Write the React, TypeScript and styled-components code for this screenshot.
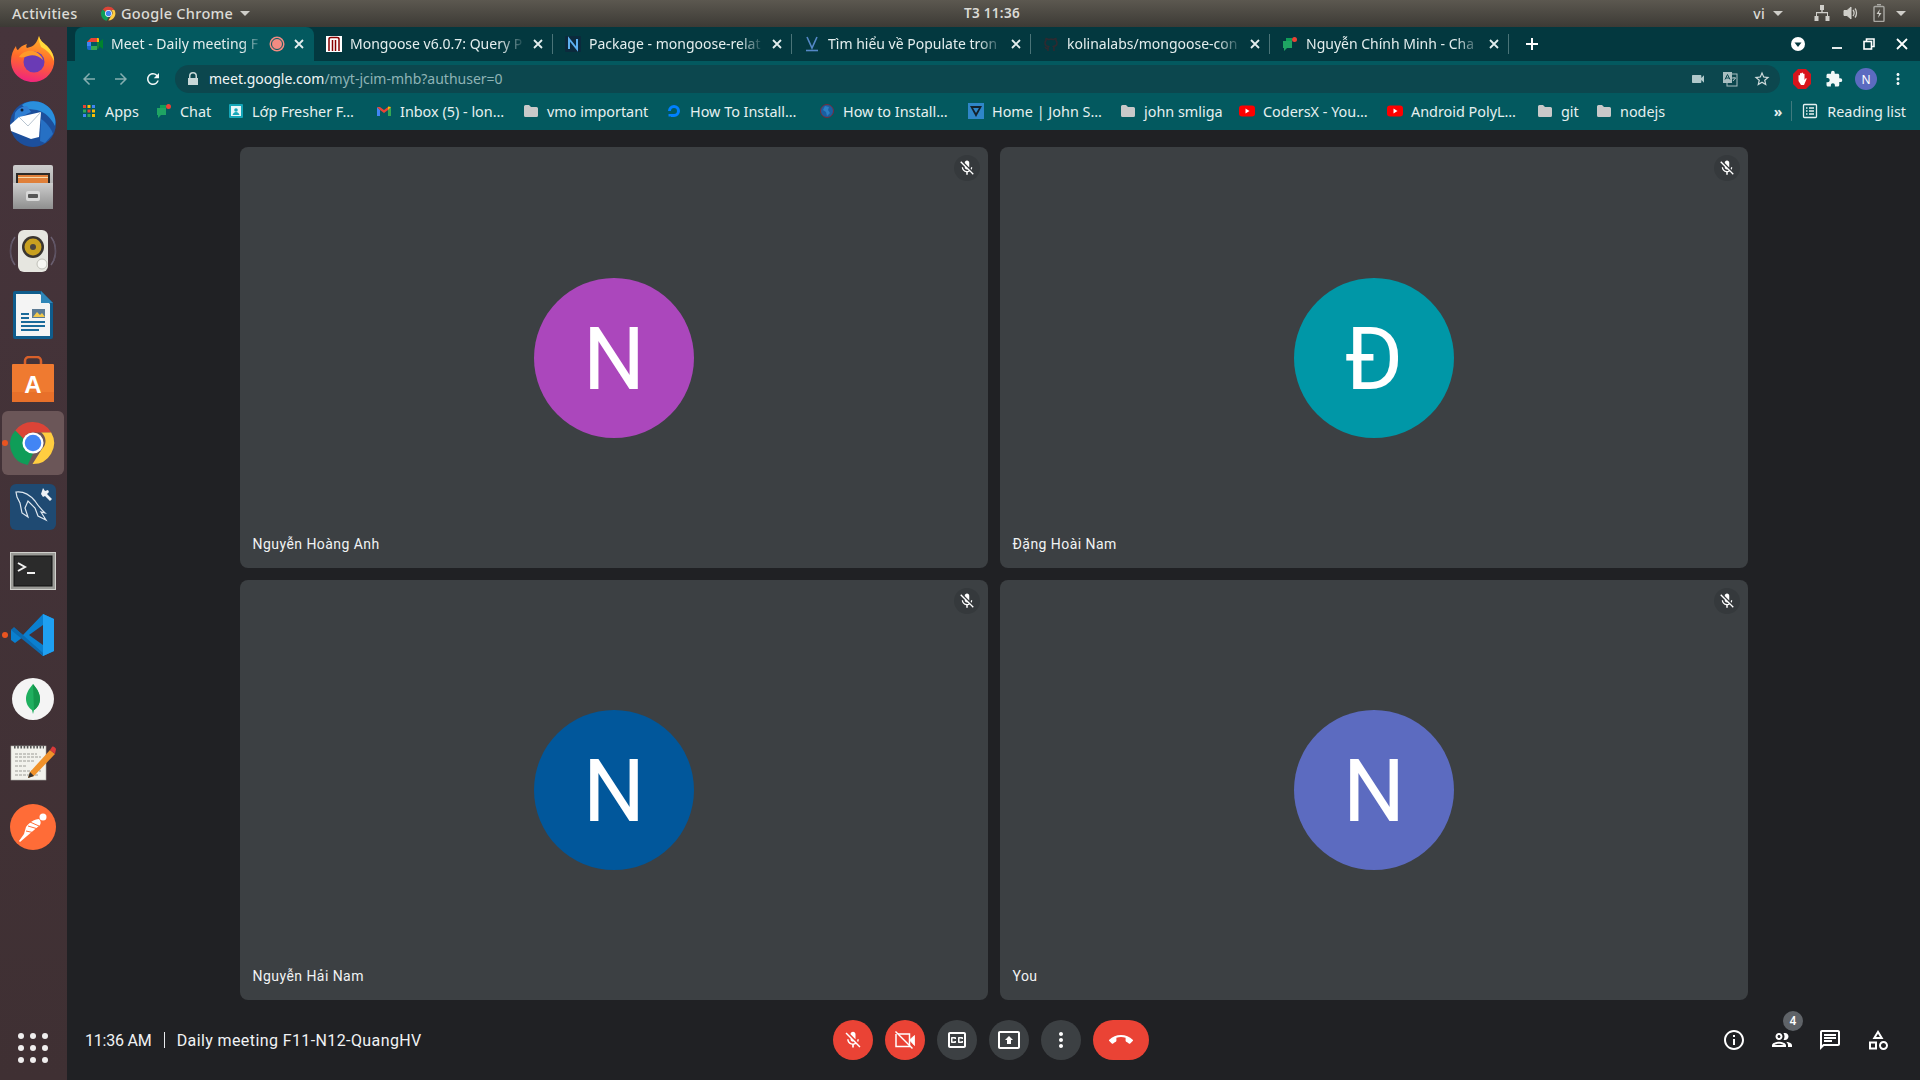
import React from "react";
import styled, { createGlobalStyle } from "styled-components";

const GlobalStyle = createGlobalStyle`
  html, body { margin: 0; padding: 0; background: #202124; }
  * { box-sizing: border-box; }
`;

const ChromeLogo = ({ size = 16 }: { size?: number }) => (
  <svg width={size} height={size} viewBox="0 0 48 48">
    <path d="M24 2a22 22 0 0 1 19 11H24a11 11 0 0 0-10 6.500L5.500 11A22 22 0 0 1 24 2z" fill="#db4437" />
    <path d="M5.500 11L14 19.500 24 35l-5.500 12A22 22 0 0 1 5.500 11z" fill="#0f9d58" />
    <path d="M43 13a22 22 0 0 1-19.500 33L33.500 30a11 11 0 0 0-1-17z" fill="#ffcd40" />
    <circle cx="24" cy="24" r="11" fill="#fff" />
    <circle cx="24" cy="24" r="8.600" fill="#4285f4" />
  </svg>
);

const Firefox = () => (
  <svg width="48" height="48" viewBox="0 0 48 48">
    <defs>
      <linearGradient id="ff" x1="0.6" y1="0" x2="0.4" y2="1">
        <stop offset="0" stopColor="#ffb52a" />
        <stop offset="0.5" stopColor="#ff6a2a" />
        <stop offset="1" stopColor="#f0237f" />
      </linearGradient>
    </defs>
    <path d="M30 1c1 5 4 6 8 10 6 6 8 12 7 18-2 11-11 18-21 18C12 47 2 38 2 26c0-6 2-11 5-15 0 2 1 4 2 4 2-3 5-5 9-6-1 2-1 3 0 4 4-1 9-2 12-12z" fill="url(#ff)" />
    <path d="M30 1c1 5 4 6 8 10 5 5 7 10 7 15-3-7-7-11-13-14-1-4-3-6-2-11z" fill="#ffd93b" />
    <circle cx="25" cy="27" r="10.500" fill="#6a3bb5" />
    <path d="M10 22c3-5 9-7 14-6 5 1 9 5 10 9-4-4-10-6-15-4-3 1-6 2-9 1z" fill="#ff9a2a" />
  </svg>
);

const Thunderbird = () => (
  <svg width="50" height="48" viewBox="0 0 50 48">
    <circle cx="25" cy="25" r="23" fill="#1c4f9c" />
    <path d="M14 6c8-6 22-5 30 6 3 5 4 10 3 15-4-8-10-14-18-16-6-1-11 0-15-5z" fill="#2a8fdc" />
    <path d="M7 14c3-5 8-7 12-7l4 6-12 6-5 5z" fill="#2f7fd4" />
    <path d="M33 13l-22 5-9 8 1 6 20 8 8-2z" fill="#fff" />
    <path d="M11 18l9 9 13-14" fill="none" stroke="#b8c4d0" strokeWidth="1" />
    <path d="M33 20c5 3 10 9 12 15l-8 9-5-2z" fill="#2670c4" />
    <circle cx="14" cy="11" r="1.500" fill="#12223a" />
  </svg>
);

const FileCabinet = () => (
  <svg width="40" height="44" viewBox="0 0 40 44">
    <defs>
      <linearGradient id="fc" x1="0" y1="0" x2="0" y2="1">
        <stop offset="0" stopColor="#cdcdcd" />
        <stop offset="1" stopColor="#8f8f8f" />
      </linearGradient>
    </defs>
    <rect x="0" y="0" width="40" height="44" rx="2" fill="url(#fc)" />
    <rect x="3" y="8" width="34" height="12" fill="#2c2a28" />
    <rect x="5" y="10" width="30" height="9" fill="#e0803a" />
    <rect x="5" y="12" width="30" height="1" fill="#f5d8a8" />
    <rect x="0" y="18" width="40" height="26" fill="url(#fc)" />
    <rect x="13" y="26" width="14" height="10" rx="2" fill="#d8d8d8" />
    <rect x="15" y="29" width="10" height="4" rx="1" fill="#555" />
  </svg>
);

const Speaker = () => (
  <svg width="48" height="44" viewBox="0 0 48 44">
    <path d="M6 8C0 16 0 28 6 36M42 8c6 8 6 20 0 28" fill="none" stroke="#6a5f70" strokeWidth="1.500" />
    <path d="M3 12c-2 6-2 14 0 20M45 12c2 6 2 14 0 20" fill="none" stroke="#5a5060" strokeWidth="1" />
    <rect x="9" y="1" width="30" height="42" rx="6" fill="#e6e6e0" />
    <circle cx="24" cy="18" r="11" fill="#3a3530" />
    <circle cx="24" cy="18" r="8.500" fill="#c8a020" />
    <circle cx="24" cy="18" r="3" fill="#4a4540" />
    <circle cx="33" cy="35" r="5" fill="#f6f6f2" stroke="#c0c0b8" />
  </svg>
);

const Writer = () => (
  <svg width="40" height="48" viewBox="0 0 40 48">
    <path d="M2 0h26l12 12v34a2 2 0 0 1-2 2H2a2 2 0 0 1-2-2V2a2 2 0 0 1 2-2z" fill="#0f5c8c" />
    <path d="M3 3h24l10 10v32H3z" fill="#f4f4f4" />
    <path d="M28 0l12 12H28z" fill="#2f86b8" />
    <path d="M8 22h8v2H8zM8 26h8v2H8zM8 30h24v2H8zM8 34h24v2H8zM8 38h18v2H8z" fill="#1a6a9a" />
    <rect x="19" y="18" width="13" height="9" fill="#5b7a94" />
    <path d="M20 26l4-5 3 3 2-2 3 4z" fill="#f2c94c" />
  </svg>
);

const Store = () => (
  <svg width="42" height="46" viewBox="0 0 42 46">
    <path d="M13 10V5a4 4 0 0 1 4-4h8a4 4 0 0 1 4 4v5" fill="none" stroke="#d8602a" strokeWidth="2.500" />
    <rect x="0" y="8" width="42" height="38" rx="1" fill="#ef7a30" />
    <rect x="0" y="36" width="42" height="10" fill="#e8702a" />
    <text x="21" y="37" textAnchor="middle" fontFamily="Liberation Sans" fontWeight="700" fontSize="24" fill="#fff">A</text>
  </svg>
);

const Workbench = () => (
  <svg width="46" height="46" viewBox="0 0 46 46">
    <rect x="0" y="0" width="46" height="46" rx="6" fill="#1f4a72" />
    <path d="M6 8c8-1 14 3 19 9 3 5 7 9 10 12l-4-1 5 8-8-4-3-8-7-7-3 7 3 9-6-4-2-10-3-6z" fill="none" stroke="#dfe8f0" strokeWidth="1.200" />
    <path d="M33 4l2 3 3-1 1 2-2 2 5 5-2 2-5-5-2 1-2-3z" fill="#eef2f6" />
  </svg>
);

const Terminal = () => (
  <svg width="46" height="38" viewBox="0 0 46 38">
    <rect x="0" y="0" width="46" height="38" fill="#d0d0cc" />
    <rect x="1" y="1" width="44" height="36" fill="#9a9a96" />
    <rect x="4" y="4" width="38" height="30" fill="#2b2b2b" stroke="#111" />
    <path d="M8 11l7 4-7 4" fill="none" stroke="#f2f2f2" strokeWidth="2" />
    <rect x="17" y="20" width="8" height="2" fill="#f2f2f2" />
  </svg>
);

const VsCode = () => (
  <svg width="44" height="44" viewBox="0 0 44 44">
    <path d="M32 1l11 5v32l-11 5-20-19L4 30l-4-3 0-10 3-2 9 7z" fill="#0a7fcf" />
    <path d="M32 1l11 5v32l-11 5z" fill="#1fa0f2" />
    <path d="M32 12L18 22l14 10z" fill="#443038" />
    <path d="M3 14l29 26v3L0 17z" fill="#0c6ab0" />
  </svg>
);

const Mongo = () => (
  <svg width="42" height="42" viewBox="0 0 42 42">
    <circle cx="21" cy="21" r="21" fill="#f4f4f4" />
    <path d="M21 6c5 6 7 10 7 15s-3 9-6 11l-1 4-1-4c-3-2-6-6-6-11s2-9 7-15z" fill="#1faf5f" />
    <path d="M21 6c5 6 7 10 7 15s-3 9-6 11z" fill="#14964c" />
  </svg>
);

const Notepad = () => (
  <svg width="46" height="38" viewBox="0 0 46 38">
    <rect x="1" y="2" width="35" height="34" fill="#f2f2ec" stroke="#b0b0aa" strokeWidth="0.6" />
    <path d="M4 3h30" stroke="#555" strokeWidth="3" strokeDasharray="1.600 1.600" />
    <path d="M5 10h22M5 13h26M5 17h20M5 22h12M5 27h26M5 31h24" stroke="#9c9c96" strokeWidth="1" strokeDasharray="3 1" />
    <path d="M20 28l20-22 5 4-21 22-6 2z" fill="#f0922a" />
    <path d="M40 6l2-3c1-1 3 0 4 2l-1 5z" fill="#d83a3a" />
    <path d="M20 28l-2 6 6-2z" fill="#333" />
  </svg>
);

const Postman = () => (
  <svg width="46" height="46" viewBox="0 0 46 46">
    <circle cx="23" cy="23" r="23" fill="#ff6c37" />
    <circle cx="33" cy="13" r="3.500" fill="#fff" />
    <path d="M29 15c2 2 2 4 1 6L17 32l-7 6-1-1 5-7 2-7c3-4 8-8 13-8z" fill="#fff" />
    <path d="M18 22l10 3M20 18l9 4M16 27l9 2" stroke="#ff6c37" strokeWidth="1" />
  </svg>
);

const Screen = styled.div`
  width: 1920px;
  height: 1080px;
  display: flex;
  flex-direction: column;
  overflow: hidden;
  background: #202124;
`;

const TopBar = styled.div`
  height: 27px;
  flex: none;
  display: flex;
  align-items: center;
  padding-bottom: 1px;
  background: linear-gradient(#5c5850, #3c3a35);
  color: #dcdbd6;
  font: 500 14.500px "Noto Sans", sans-serif;
  letter-spacing: 0.3px;
`;

const Activities = styled.div`
  width: 89px;
  padding-left: 12px;
`;

const AppMenu = styled.div`
  width: 875px;
  display: flex;
  align-items: center;
  padding-left: 12px;
  gap: 5px;
`;

const Caret = styled.span`
  width: 0;
  height: 0;
  margin-left: ${(p: { $left?: number }) => p.$left ?? 0}px;
  border-left: 5px solid transparent;
  border-right: 5px solid transparent;
  border-top: 5px solid #cfcec9;
`;

const Clock = styled.div`
  width: 57px;
  white-space: nowrap;
  font-weight: 600;
  font-size: 13.500px;
`;

const Tray = styled.div`
  margin-left: auto;
  display: flex;
  align-items: center;
  padding-right: 14px;
`;

const TrayLabel = styled.span`
  font-size: 14px;
`;

const TrayIcon = styled.span`
  display: flex;
  margin-left: ${(p: { $left: number }) => p.$left}px;
`;

const Body = styled.div`
  flex: 1;
  display: flex;
  min-height: 0;
`;

const Dock = styled.nav`
  width: 67px;
  flex: none;
  display: flex;
  flex-direction: column;
  align-items: center;
  padding-right: 1px;
  background: linear-gradient(#46343b, #3f3033);
`;

const DockSlot = styled.div<{ $active?: boolean; $running?: boolean }>`
  position: relative;
  width: 62px;
  height: 64px;
  flex: none;
  display: flex;
  align-items: center;
  justify-content: center;
  border-radius: 6px;
  background: ${(p) => (p.$active ? "#6b5658" : "transparent")};
  &::before {
    content: "";
    display: ${(p) => (p.$running ? "block" : "none")};
    position: absolute;
    left: 0;
    top: 29px;
    width: 6px;
    height: 6px;
    border-radius: 50%;
    background: #e95420;
  }
`;

const AppsGrid = styled.div`
  margin-top: auto;
  margin-bottom: 17px;
  display: grid;
  grid-template-columns: repeat(3, 6px);
  gap: 6px;
`;

const AppsDot = styled.span`
  width: 6px;
  height: 6px;
  border-radius: 50%;
  background: #f0eeee;
`;

const Main = styled.div`
  flex: 1;
  display: flex;
  flex-direction: column;
  min-width: 0;
`;

const TabStrip = styled.div`
  height: 34px;
  flex: none;
  display: flex;
  align-items: stretch;
  padding-left: 8px;
  background: #03383f;
  font: 400 14px "Noto Sans", sans-serif;
  color: #e4eeee;
`;

const Tab = styled.div<{ $active?: boolean; $sep?: boolean }>`
  position: relative;
  width: 239px;
  flex: none;
  display: flex;
  align-items: center;
  padding: 0 10px 0 12px;
  gap: 8px;
  border-radius: 8px 8px 0 0;
  background: ${(p) => (p.$active ? "#03595f" : "transparent")};
  &::after {
    content: "";
    display: ${(p) => (p.$sep ? "block" : "none")};
    position: absolute;
    right: 0;
    top: 7px;
    width: 1px;
    height: 20px;
    background: #4a7478;
  }
`;

const TabTitle = styled.span`
  flex: 1;
  min-width: 0;
  padding-bottom: 2px;
  white-space: nowrap;
  -webkit-mask-image: linear-gradient(to right, #000 86%, transparent 100%);
  mask-image: linear-gradient(to right, #000 86%, transparent 100%);
`;

const RecDot = styled.span`
  width: 12px;
  height: 12px;
  flex: none;
  border-radius: 50%;
  background: #f28b82;
  border: 1.500px solid #03595f;
  box-shadow: 0 0 0 1.500px #f28b82;
  margin-right: 3px;
`;

const NewTab = styled.div`
  width: 46px;
  display: flex;
  align-items: center;
  justify-content: center;
`;

const WinControls = styled.div`
  margin-left: auto;
  display: flex;
  align-items: center;
  padding-right: 2px;
`;

const WinBtn = styled.div`
  width: ${(p: { $w: number }) => p.$w}px;
  display: flex;
  align-items: center;
  justify-content: center;
`;

const Toolbar = styled.div`
  height: 36px;
  flex: none;
  display: flex;
  align-items: center;
  padding: 0 6px;
  background: #03595f;
`;

const ToolBtn = styled.div`
  width: 32px;
  height: 28px;
  flex: none;
  display: flex;
  align-items: center;
  justify-content: center;
`;

const Omnibox = styled.div`
  flex: 1;
  height: 28px;
  margin: 0 6px;
  display: flex;
  align-items: center;
  padding: 0 2px 0 12px;
  border-radius: 14px;
  background: #0c474e;
  font: 400 14px "Noto Sans", sans-serif;
  color: #8fb4b6;
`;

const Host = styled.span`
  color: #f0f6f6;
`;

const Url = styled.div`
  flex: 1;
  margin-left: 10px;
  padding-bottom: 2px;
  white-space: nowrap;
`;

const Avatar = styled.span`
  width: 22px;
  height: 22px;
  border-radius: 50%;
  display: flex;
  align-items: center;
  justify-content: center;
  background: #5c6bc0;
  color: #fff;
  font: 400 12px "Noto Sans", sans-serif;
`;

const Bookmarks = styled.div`
  height: 33px;
  flex: none;
  display: flex;
  align-items: center;
  padding: 0 14px 5px 14px;
  background: #03595f;
  font: 400 14.400px "Noto Sans", sans-serif;
  color: #e6f0f0;
`;

const Bookmark = styled.div<{ $w: number }>`
  width: ${(p) => p.$w}px;
  flex: none;
  display: flex;
  align-items: center;
  gap: 8px;
  white-space: nowrap;
`;

const BookmarksEnd = styled.div`
  margin-left: auto;
  display: flex;
  align-items: center;
  color: #e6f0f0;
`;

const Chevrons = styled.span`
  font-size: 14px;
  font-weight: 700;
  margin-right: 9px;
`;

const BarRule = styled.span`
  width: 1px;
  height: 20px;
  background: #3f7a7e;
  margin-right: 10px;
`;

const ReadingLabel = styled.span`
  margin-left: 9px;
`;

const Meet = styled.main`
  flex: 1;
  display: flex;
  flex-direction: column;
  min-height: 0;
  background: #202124;
  color: #fff;
  font-family: Roboto, sans-serif;
`;

const TileGrid = styled.div`
  flex: 1;
  display: grid;
  grid-template-columns: 748px 748px;
  grid-template-rows: 421px 420px;
  justify-content: center;
  gap: 12px;
  padding-top: 17px;
`;

const Tile = styled.section`
  position: relative;
  display: flex;
  align-items: center;
  justify-content: center;
  border-radius: 8px;
  background: #3c4043;
`;

const Initial = styled.div<{ $color: string }>`
  width: 160px;
  height: 160px;
  border-radius: 50%;
  display: flex;
  align-items: center;
  justify-content: center;
  padding: 2px 0 0 1px;
  background: ${(p) => p.$color};
  font: 400 87px Roboto, sans-serif;
  color: #fff;
`;

const NameTag = styled.div`
  position: absolute;
  left: 13px;
  bottom: 16px;
  font: 400 14px Roboto, sans-serif;
  letter-spacing: 0.45px;
  color: #f1f3f4;
`;

const MuteBadge = styled.div`
  position: absolute;
  top: 8px;
  right: 8px;
  width: 26px;
  height: 26px;
  border-radius: 50%;
  display: flex;
  align-items: center;
  justify-content: center;
  background: #35393c;
`;

const BottomBar = styled.footer`
  height: 80px;
  flex: none;
  display: grid;
  grid-template-columns: 1fr auto 1fr;
  align-items: center;
  background: #202124;
`;

const MeetingInfo = styled.div`
  display: flex;
  align-items: center;
  padding-left: 18px;
  font: 400 16px Roboto, sans-serif;
  letter-spacing: 0.4px;
  color: #f1f3f4;
  white-space: nowrap;
`;

const MeetingTime = styled.span`
  letter-spacing: -0.2px;
`;

const InfoRule = styled.span`
  width: 1px;
  height: 16px;
  margin: 0 12px;
  background: #e8eaed;
`;

const Controls = styled.div`
  display: flex;
  gap: 12px;
  margin-left: -5px;
`;

const RoundBtn = styled.button<{ $danger?: boolean; $wide?: boolean }>`
  width: ${(p) => (p.$wide ? 56 : 40)}px;
  height: 40px;
  padding: 0;
  border: 0;
  border-radius: 20px;
  display: flex;
  align-items: center;
  justify-content: center;
  background: ${(p) => (p.$danger ? "#ea4335" : "#3c4043")};
`;

const SideTools = styled.div`
  justify-self: end;
  display: flex;
  gap: 12px;
  padding-right: 24px;
`;

const SideBtn = styled.div`
  position: relative;
  width: 36px;
  height: 36px;
  display: flex;
  align-items: center;
  justify-content: center;
`;

const CountBadge = styled.span`
  position: absolute;
  top: -11px;
  right: -3px;
  width: 20px;
  height: 20px;
  border-radius: 50%;
  display: flex;
  align-items: center;
  justify-content: center;
  background: #5f6368;
  font: 500 12px Roboto, sans-serif;
  color: #fff;
`;

const Ico = ({ d, size = 24, color = "#fff" }: { d: string; size?: number; color?: string }) => (
  <svg width={size} height={size} viewBox="0 0 24 24" fill={color}>
    <path d={d} />
  </svg>
);

const MIC_OFF =
  "M19 11h-1.700c0 .74-.16 1.430-.43 2.050l1.230 1.230c.56-.98.9-2.090.9-3.280zm-4.020.17c0-.06.02-.11.02-.17V5c0-1.660-1.340-3-3-3S9 3.340 9 5v.18l5.980 5.990zM4.270 3L3 4.270l6.010 6.010V11c0 1.660 1.330 3 2.990 3 .22 0 .44-.03.65-.08l1.660 1.660c-.71.33-1.500.52-2.310.52-2.760 0-5.300-2.100-5.300-5.100H5c0 3.410 2.720 6.230 6 6.720V21h2v-3.280c.91-.13 1.770-.45 2.540-.9L19.730 21 21 19.730 4.270 3z";
const CC =
  "M19 4H5c-1.110 0-2 .9-2 2v12c0 1.100.89 2 2 2h14c1.100 0 2-.9 2-2V6c0-1.100-.9-2-2-2zm0 14H5V6h14v12zM7 15h3c.55 0 1-.45 1-1v-1H9.500v.5h-2v-3h2v.5H11v-1c0-.55-.45-1-1-1H7c-.55 0-1 .45-1 1v4c0 .55.45 1 1 1zm7 0h3c.55 0 1-.45 1-1v-1h-1.500v.5h-2v-3h2v.5H18v-1c0-.55-.45-1-1-1h-3c-.55 0-1 .45-1 1v4c0 .55.45 1 1 1z";
const PRESENT =
  "M21 3H3c-1.110 0-2 .89-2 2v14c0 1.110.89 2 2 2h18c1.110 0 2-.89 2-2V5c0-1.110-.89-2-2-2zm0 16.020H3V4.980h18v14.040zM10 12H8l4-4 4 4h-2v4h-4v-4z";
const MORE =
  "M12 8c1.100 0 2-.9 2-2s-.9-2-2-2-2 .9-2 2 .9 2 2 2zm0 2c-1.100 0-2 .9-2 2s.9 2 2 2 2-.9 2-2-.9-2-2-2zm0 6c-1.100 0-2 .9-2 2s.9 2 2 2 2-.9 2-2-.9-2-2-2z";
const CALL_END =
  "M12 9c-1.600 0-3.150.25-4.600.72v3.100c0 .39-.23.74-.56.9-.98.49-1.870 1.120-2.660 1.850-.18.18-.43.28-.7.28-.28 0-.53-.11-.71-.29L.29 13.080c-.18-.17-.29-.42-.29-.7 0-.28.11-.53.29-.71C3.340 8.780 7.460 7 12 7s8.660 1.780 11.710 4.670c.18.18.29.43.29.71 0 .28-.11.53-.29.71l-2.480 2.480c-.18.18-.43.29-.71.29-.27 0-.52-.11-.7-.28-.79-.74-1.690-1.360-2.670-1.850-.33-.16-.56-.5-.56-.9v-3.100C15.150 9.250 13.600 9 12 9z";
const INFO =
  "M11 7h2v2h-2zm0 4h2v6h-2zm1-9C6.480 2 2 6.480 2 12s4.480 10 10 10 10-4.480 10-10S17.520 2 12 2zm0 18c-4.410 0-8-3.590-8-8s3.590-8 8-8 8 3.590 8 8-3.590 8-8 8z";
const PEOPLE =
  "M9 13.750c-2.340 0-7 1.170-7 3.500V19h14v-1.750c0-2.330-4.660-3.500-7-3.500zM4.340 17c.84-.58 2.870-1.250 4.660-1.250s3.820.67 4.660 1.250H4.340zM9 12c1.930 0 3.500-1.570 3.500-3.500S10.930 5 9 5 5.500 6.570 5.500 8.500 7.070 12 9 12zm0-5c.83 0 1.500.67 1.500 1.500S9.830 10 9 10s-1.500-.67-1.500-1.500S8.170 7 9 7zm7.040 6.810c1.160.84 1.960 1.960 1.960 3.440V19h4v-1.750c0-2.020-3.500-3.170-5.960-3.440zM15 12c1.930 0 3.500-1.570 3.500-3.500S16.930 5 15 5c-.54 0-1.040.13-1.500.35.63.89 1 1.980 1 3.150s-.37 2.260-1 3.150c.46.22.96.35 1.500.35z";
const CHAT =
  "M20 2H4c-1.100 0-2 .9-2 2v18l4-4h14c1.100 0 2-.9 2-2V4c0-1.100-.9-2-2-2zm0 14H5.170L4 17.170V4h16v12zM6 12h8v2H6zm0-3h12v2H6zm0-3h12v2H6z";
const CATEGORY =
  "M12 2l-5.500 9h11L12 2zm0 3.840L13.930 9h-3.870L12 5.840zM17.500 13c-2.490 0-4.500 2.010-4.500 4.500s2.010 4.500 4.500 4.500 4.500-2.010 4.500-4.500-2.010-4.500-4.500-4.500zm0 7c-1.380 0-2.500-1.120-2.500-2.500s1.120-2.500 2.500-2.500 2.500 1.120 2.500 2.500-1.120 2.500-2.500 2.500zM3 21.500h8v-8H3v8zm2-6h4v4H5v-4z";

const CamOff = () => (
  <svg width="24" height="24" viewBox="0 0 24 24" fill="none" stroke="#fff" strokeWidth="1.500">
    <path d="M5 6h11.500v12.500H3V6" />
    <path d="M16.500 12l5-4.500v10z" fill="#fff" strokeWidth="0.8" />
    <path d="M2.500 3.500l17 17" />
  </svg>
);

const Folder = () => (
  <svg width="16" height="16" viewBox="0 0 16 16" fill="#c9c9c9">
    <path d="M1 3.500A1.500 1.500 0 0 1 2.500 2H6l2 2h5.500A1.500 1.500 0 0 1 15 5.500v7a1.500 1.500 0 0 1-1.500 1.500h-11A1.500 1.500 0 0 1 1 12.500z" />
  </svg>
);

const YouTube = () => (
  <svg width="16" height="16" viewBox="0 0 16 16">
    <rect x="0" y="2.500" width="16" height="11" rx="3" fill="#f00" />
    <path d="M6.500 5.500l4 2.500-4 2.500z" fill="#fff" />
  </svg>
);

const ChatFav = () => (
  <svg width="16" height="16" viewBox="0 0 16 16">
    <path d="M1 5h9v7H5l-3 3v-3H1z" fill="#1fa463" />
    <path d="M4 2h6v3H4z" fill="#0f9d58" />
    <circle cx="12.500" cy="3.500" r="2.500" fill="#ea4335" />
  </svg>
);

const MeetFav = () => (
  <svg width="16" height="16" viewBox="0 0 16 16">
    <path d="M4 2h6v4H0z" fill="#ea4335" />
    <path d="M0 6h4v4H0z" fill="#4285f4" />
    <path d="M0 10h4v4H2a2 2 0 0 1-2-2z" fill="#1967d2" />
    <path d="M4 10h6v4H4z" fill="#34a853" />
    <path d="M10 2h1a1 1 0 0 1 1 1v3h-2z" fill="#fbbc04" />
    <path d="M10 6h2v5a2 2 0 0 1-2 2z" fill="#188038" />
    <path d="M12 6l4-3v10l-4-3z" fill="#00832d" />
  </svg>
);

const MongooseFav = () => (
  <svg width="16" height="16" viewBox="0 0 16 16">
    <rect width="16" height="16" fill="#fff" />
    <path d="M3 15V3c0-1 1-1.500 2-1.500h6c1 0 2 .5 2 1.500v12M6.500 15V4M9.500 15V4" fill="none" stroke="#800" strokeWidth="1.500" />
  </svg>
);

const NpmFav = () => (
  <svg width="16" height="16" viewBox="0 0 16 16">
    <rect width="16" height="16" rx="1" fill="#0b2a3c" />
    <path d="M4 13V3l8 10V3" fill="none" stroke="#5db0f0" strokeWidth="2" />
  </svg>
);

const VibloFav = () => (
  <svg width="16" height="16" viewBox="0 0 16 16">
    <path d="M3 1l5 11 5-11" fill="none" stroke="#5488c7" strokeWidth="1.600" />
    <path d="M2 14.500h12" stroke="#5488c7" strokeWidth="1.600" />
  </svg>
);

const GithubFav = () => (
  <svg width="16" height="16" viewBox="0 0 16 16">
    <path d="M5 15v-2.500C3 13 2.500 11.500 2 11M11 15v-2.500c0-1 0-1.500-.5-2 2-.3 3.500-1.200 3.500-3.500 0-1-.3-1.700-1-2.400.2-.7.1-1.500-.1-2-1 0-1.700.5-2.300 1a7 7 0 0 0-5.200 0C4.800 3.100 4.100 2.600 3.100 2.600c-.2.500-.3 1.300-.1 2C2.300 5.300 2 6 2 7c0 2.300 1.500 3.200 3.500 3.500-.3.300-.5.800-.5 1.500" fill="none" stroke="#2e2a30" strokeWidth="1.600" />
  </svg>
);

const AppsFav = () => {
  const colors = ["#ea4335", "#fbbc04", "#4285f4", "#34a853", "#ea4335", "#fbbc04", "#4285f4", "#34a853", "#fbbc04"];
  return (
    <svg width="16" height="16" viewBox="0 0 16 16">
      {colors.map((c, i) => (
        <rect key={i} x={2 + (i % 3) * 4.500} y={2 + Math.floor(i / 3) * 4.500} width="3" height="3" fill={c} />
      ))}
    </svg>
  );
};

const ClassroomFav = () => (
  <svg width="16" height="16" viewBox="0 0 16 16">
    <rect x="1" y="1" width="14" height="14" rx="1" fill="#15a6b8" />
    <rect x="3" y="3" width="10" height="10" fill="#e8f6f8" />
    <circle cx="8" cy="7" r="1.800" fill="#15a6b8" />
    <path d="M4.500 12c.5-2 2-3 3.500-3s3 1 3.500 3z" fill="#15a6b8" />
  </svg>
);

const GmailFav = () => (
  <svg width="16" height="16" viewBox="0 0 16 16">
    <path d="M1 4v9h3V7z" fill="#4285f4" />
    <path d="M15 4v9h-3V7z" fill="#34a853" />
    <path d="M1 4l3 0 4 3 4-3 3 0-3 3-4 3-4-3z" fill="#ea4335" />
    <path d="M12 3.500l3 .5-3 3z" fill="#fbbc04" />
  </svg>
);

const DoFav = () => (
  <svg width="16" height="16" viewBox="0 0 16 16">
    <path d="M8 14v-3a3 3 0 1 0-3-3H2a6 6 0 1 1 6 6z" fill="#0080ff" />
    <path d="M5 11h3v3H5zM2.500 11H5v2.500H2.500z" fill="#0080ff" />
  </svg>
);

const GlobeFav = () => (
  <svg width="16" height="16" viewBox="0 0 16 16">
    <circle cx="8" cy="8" r="6.500" fill="#1a5fa0" stroke="#7a2a3a" />
    <path d="M6 3l4 1-1 3 2 3-3 3-1-4-3-2z" fill="#2c7fc4" />
  </svg>
);

const VueFav = () => (
  <svg width="16" height="16" viewBox="0 0 16 16">
    <rect width="16" height="16" fill="#2f86c8" />
    <path d="M2 3h12l-6 11z" fill="#14212c" />
    <path d="M5 5h6l-3 5z" fill="#2f86c8" />
  </svg>
);

const ReadingIcon = () => (
  <svg width="16" height="16" viewBox="0 0 16 16" fill="none" stroke="#e6f0f0" strokeWidth="1.300">
    <rect x="1.500" y="1.500" width="13" height="13" rx="1" />
    <path d="M4 5h1.500M7 5h5M4 8h1.500M7 8h5M4 11h1.500M7 11h5" />
  </svg>
);

const tabs = [
  { title: "Mongoose v6.0.7: Query P", icon: <MongooseFav /> },
  { title: "Package - mongoose-relat", icon: <NpmFav /> },
  { title: "Tìm hiểu về Populate tron", icon: <VibloFav /> },
  { title: "kolinalabs/mongoose-con", icon: <GithubFav /> },
  { title: "Nguyễn Chính Minh - Cha", icon: <ChatFav /> },
];

const marks = [
  { label: "Apps", w: 75, icon: <AppsFav /> },
  { label: "Chat", w: 72, icon: <ChatFav /> },
  { label: "Lớp Fresher F…", w: 148, icon: <ClassroomFav /> },
  { label: "Inbox (5) - lon…", w: 147, icon: <GmailFav /> },
  { label: "vmo important", w: 143, icon: <Folder /> },
  { label: "How To Install…", w: 153, icon: <DoFav /> },
  { label: "How to Install…", w: 149, icon: <GlobeFav /> },
  { label: "Home | John S…", w: 152, icon: <VueFav /> },
  { label: "john smliga", w: 119, icon: <Folder /> },
  { label: "CodersX - You…", w: 148, icon: <YouTube /> },
  { label: "Android PolyL…", w: 150, icon: <YouTube /> },
  { label: "git", w: 59, icon: <Folder /> },
  { label: "nodejs", w: 70, icon: <Folder /> },
];

const people = [
  { name: "Nguyễn Hoàng Anh", letter: "N", color: "#ab47bc" },
  { name: "Đặng Hoài Nam", letter: "Đ", color: "#0097a7" },
  { name: "Nguyễn Hải Nam", letter: "N", color: "#01579b" },
  { name: "You", letter: "N", color: "#5c6bc0" },
];

const dockApps = [
  { el: <Firefox /> },
  { el: <Thunderbird /> },
  { el: <FileCabinet /> },
  { el: <Speaker /> },
  { el: <Writer /> },
  { el: <Store /> },
  { el: <ChromeLogo size={46} />, active: true, running: true },
  { el: <Workbench /> },
  { el: <Terminal /> },
  { el: <VsCode />, running: true },
  { el: <Mongo /> },
  { el: <Notepad /> },
  { el: <Postman /> },
];

const CloseX = ({ color = "#e4eeee" }: { color?: string }) => (
  <svg width="10" height="10" viewBox="0 0 10 10" style={{ flex: "none" }}>
    <path d="M1 1l8 8M9 1l-8 8" stroke={color} strokeWidth="1.800" />
  </svg>
);

const App: React.FC = () => {
  return (
    <>
      <GlobalStyle />
      <Screen>
        <TopBar>
          <Activities>Activities</Activities>
          <AppMenu>
            <ChromeLogo size={15} />
            <span>Google Chrome</span>
            <Caret $left={2} />
          </AppMenu>
          <Clock>T3 11:36</Clock>
          <Tray>
            <TrayLabel>vi</TrayLabel>
            <Caret $left={8} />
            <TrayIcon $left={31}>
              <svg width="16" height="16" viewBox="0 0 16 16" fill="#cfcec9">
                <path d="M6 0h4v5H8.700v2H14v4h1.500v5h-4v-5H13V8.200H3V11h1.500v5h-4v-5H2V7h5.300V5H6z" />
              </svg>
            </TrayIcon>
            <TrayIcon $left={13}>
              <svg width="16" height="16" viewBox="0 0 16 16" fill="none" stroke="#cfcec9">
                <path d="M1 5.500h3L8 2v12l-4-3.500H1z" fill="#cfcec9" />
                <path d="M10 5c1.200 1.600 1.200 4.400 0 6M12 3.500c2 2.500 2 6.500 0 9" strokeWidth="1.300" />
              </svg>
            </TrayIcon>
            <TrayIcon $left={14}>
              <svg width="12" height="18" viewBox="0 0 12 18" fill="none" stroke="#a9a8a3" strokeWidth="1.400">
                <rect x="1" y="2.500" width="10" height="15" rx="1" />
                <path d="M4 0.700h4" />
                <path d="M7 5l-3.500 5H6l-1 4 3.500-5H6z" fill="#cfcec9" stroke="none" />
              </svg>
            </TrayIcon>
            <Caret $left={11} />
          </Tray>
        </TopBar>
        <Body>
          <Dock>
            {dockApps.map((a, i) => (
              <DockSlot key={i} $active={a.active} $running={a.running}>
                {a.el}
              </DockSlot>
            ))}
            <AppsGrid>
              {Array.from({ length: 9 }).map((_, i) => (
                <AppsDot key={i} />
              ))}
            </AppsGrid>
          </Dock>
          <Main>
            <TabStrip>
              <Tab $active>
                <MeetFav />
                <TabTitle>Meet - Daily meeting F</TabTitle>
                <RecDot />
                <CloseX />
              </Tab>
              {tabs.map((t) => (
                <Tab key={t.title} $sep>
                  {t.icon}
                  <TabTitle>{t.title}</TabTitle>
                  <CloseX />
                </Tab>
              ))}
              <NewTab>
                <svg width="14" height="14" viewBox="0 0 14 14">
                  <path d="M7 1v12M1 7h12" stroke="#fff" strokeWidth="2" />
                </svg>
              </NewTab>
              <WinControls>
                <WinBtn $w={48}>
                  <svg width="16" height="16" viewBox="0 0 16 16">
                    <circle cx="8" cy="8" r="7" fill="#fff" />
                    <path d="M4.500 6.500h7L8 11z" fill="#03383f" />
                  </svg>
                </WinBtn>
                <WinBtn $w={30}>
                  <svg width="12" height="12" viewBox="0 0 12 12">
                    <path d="M1 10h10" stroke="#fff" strokeWidth="1.800" />
                  </svg>
                </WinBtn>
                <WinBtn $w={34}>
                  <svg width="12" height="12" viewBox="0 0 12 12" fill="none" stroke="#fff" strokeWidth="1.600">
                    <rect x="1" y="3.500" width="7.500" height="7.500" />
                    <path d="M3.500 3V1H11v7.500H9" />
                  </svg>
                </WinBtn>
                <WinBtn $w={32}>
                  <svg width="12" height="12" viewBox="0 0 12 12">
                    <path d="M1 1l10 10M11 1L1 11" stroke="#fff" strokeWidth="1.800" />
                  </svg>
                </WinBtn>
              </WinControls>
            </TabStrip>
            <Toolbar>
              <ToolBtn>
                <Ico size={18} color="#86aeb0" d="M20 11H7.830l5.590-5.590L12 4l-8 8 8 8 1.410-1.410L7.830 13H20v-2z" />
              </ToolBtn>
              <ToolBtn>
                <Ico size={18} color="#86aeb0" d="M12 4l-1.410 1.410L16.170 11H4v2h12.170l-5.580 5.590L12 20l8-8z" />
              </ToolBtn>
              <ToolBtn>
                <Ico size={18} color="#f2f8f8" d="M17.650 6.350A7.958 7.958 0 0 0 12 4c-4.420 0-7.990 3.580-7.990 8s3.570 8 7.990 8c3.730 0 6.840-2.550 7.730-6h-2.080A5.990 5.990 0 0 1 12 18c-3.310 0-6-2.690-6-6s2.690-6 6-6c1.660 0 3.140.69 4.220 1.780L13 11h7V4l-2.350 2.350z" />
              </ToolBtn>
              <Omnibox>
                <svg width="12" height="14" viewBox="0 0 12 14">
                  <path d="M2 6V4a4 4 0 0 1 8 0v2h1v7H1V6zm1.500 0h5V4a2.500 2.500 0 0 0-5 0z" fill="#c8d8d8" />
                </svg>
                <Url>
                  <Host>meet.google.com</Host>/myt-jcim-mhb?authuser=0
                </Url>
                <ToolBtn>
                  <Ico size={16} color="#b0c8ca" d="M17 10.500V7c0-.55-.45-1-1-1H4c-.55 0-1 .45-1 1v10c0 .55.45 1 1 1h12c.55 0 1-.45 1-1v-3.500l4 4v-11l-4 4z" />
                </ToolBtn>
                <ToolBtn>
                  <svg width="16" height="16" viewBox="0 0 16 16">
                    <rect x="5" y="3" width="10" height="12" fill="none" stroke="#a9bfc1" />
                    <rect x="1" y="1" width="9" height="11" fill="#a9bfc1" />
                    <path d="M3 8.500l2.500-5 2.500 5M4 7h3" stroke="#0c474e" fill="none" />
                    <path d="M10 7h4M12 6v1M11 10l2.500-3" stroke="#a9bfc1" fill="none" />
                  </svg>
                </ToolBtn>
                <ToolBtn>
                  <Ico size={18} color="#d0dcdc" d="M22 9.240l-7.190-.62L12 2 9.190 8.630 2 9.240l5.460 4.730L5.820 21 12 17.270 18.180 21l-1.630-7.030L22 9.240zM12 15.400l-3.760 2.270 1-4.280-3.320-2.880 4.380-.38L12 6.100l1.710 4.040 4.380.38-3.320 2.880 1 4.280L12 15.400z" />
                </ToolBtn>
              </Omnibox>
              <ToolBtn>
                <svg width="18" height="20" viewBox="0 0 18 20">
                  <path d="M5 0h8l5 5v10l-5 5H5l-5-5V5z" fill="#d8141c" />
                  <path d="M5.500 12V6.500a1 1 0 0 1 1.500 0V4.500a1 1 0 0 1 1.500 0V4a1 1 0 0 1 1.500 0v1a1 1 0 0 1 1.500 0v6l1-1.500c.8-.6 1.500 0 1 .8L11 16H8l-2.500-4z" fill="#fff" />
                </svg>
              </ToolBtn>
              <ToolBtn>
                <Ico size={18} color="#f2f8f8" d="M20.500 11H19V7c0-1.100-.9-2-2-2h-4V3.500a2.500 2.500 0 0 0-5 0V5H4c-1.100 0-1.990.9-1.990 2v3.800H3.500c1.490 0 2.700 1.210 2.700 2.700s-1.210 2.700-2.700 2.700H2V20c0 1.100.9 2 2 2h3.800v-1.500c0-1.490 1.210-2.700 2.700-2.700s2.700 1.210 2.700 2.700V22H17c1.100 0 2-.9 2-2v-4h1.500a2.500 2.500 0 0 0 0-5z" />
              </ToolBtn>
              <ToolBtn>
                <Avatar>N</Avatar>
              </ToolBtn>
              <ToolBtn>
                <Ico size={18} color="#f2f8f8" d={MORE} />
              </ToolBtn>
            </Toolbar>
            <Bookmarks>
              {marks.map((m) => (
                <Bookmark key={m.label} $w={m.w}>
                  {m.icon}
                  {m.label}
                </Bookmark>
              ))}
              <BookmarksEnd>
                <Chevrons>»</Chevrons>
                <BarRule />
                <ReadingIcon />
                <ReadingLabel>Reading list</ReadingLabel>
              </BookmarksEnd>
            </Bookmarks>
            <Meet>
              <TileGrid>
                {people.map((p) => (
                  <Tile key={p.name}>
                    <Initial $color={p.color}>{p.letter}</Initial>
                    <NameTag>{p.name}</NameTag>
                    <MuteBadge>
                      <Ico size={18} d={MIC_OFF} />
                    </MuteBadge>
                  </Tile>
                ))}
              </TileGrid>
              <BottomBar>
                <MeetingInfo>
                  <MeetingTime>11:36 AM</MeetingTime>
                  <InfoRule />
                  Daily meeting F11-N12-QuangHV
                </MeetingInfo>
                <Controls>
                  <RoundBtn $danger>
                    <Ico size={20} d={MIC_OFF} />
                  </RoundBtn>
                  <RoundBtn $danger>
                    <CamOff />
                  </RoundBtn>
                  <RoundBtn>
                    <Ico d={CC} />
                  </RoundBtn>
                  <RoundBtn>
                    <Ico d={PRESENT} />
                  </RoundBtn>
                  <RoundBtn>
                    <Ico d={MORE} />
                  </RoundBtn>
                  <RoundBtn $danger $wide>
                    <Ico d={CALL_END} />
                  </RoundBtn>
                </Controls>
                <SideTools>
                  <SideBtn>
                    <Ico d={INFO} />
                  </SideBtn>
                  <SideBtn>
                    <Ico d={PEOPLE} />
                    <CountBadge>4</CountBadge>
                  </SideBtn>
                  <SideBtn>
                    <Ico d={CHAT} />
                  </SideBtn>
                  <SideBtn>
                    <Ico d={CATEGORY} />
                  </SideBtn>
                </SideTools>
              </BottomBar>
            </Meet>
          </Main>
        </Body>
      </Screen>
    </>
  );
};

export default App;
